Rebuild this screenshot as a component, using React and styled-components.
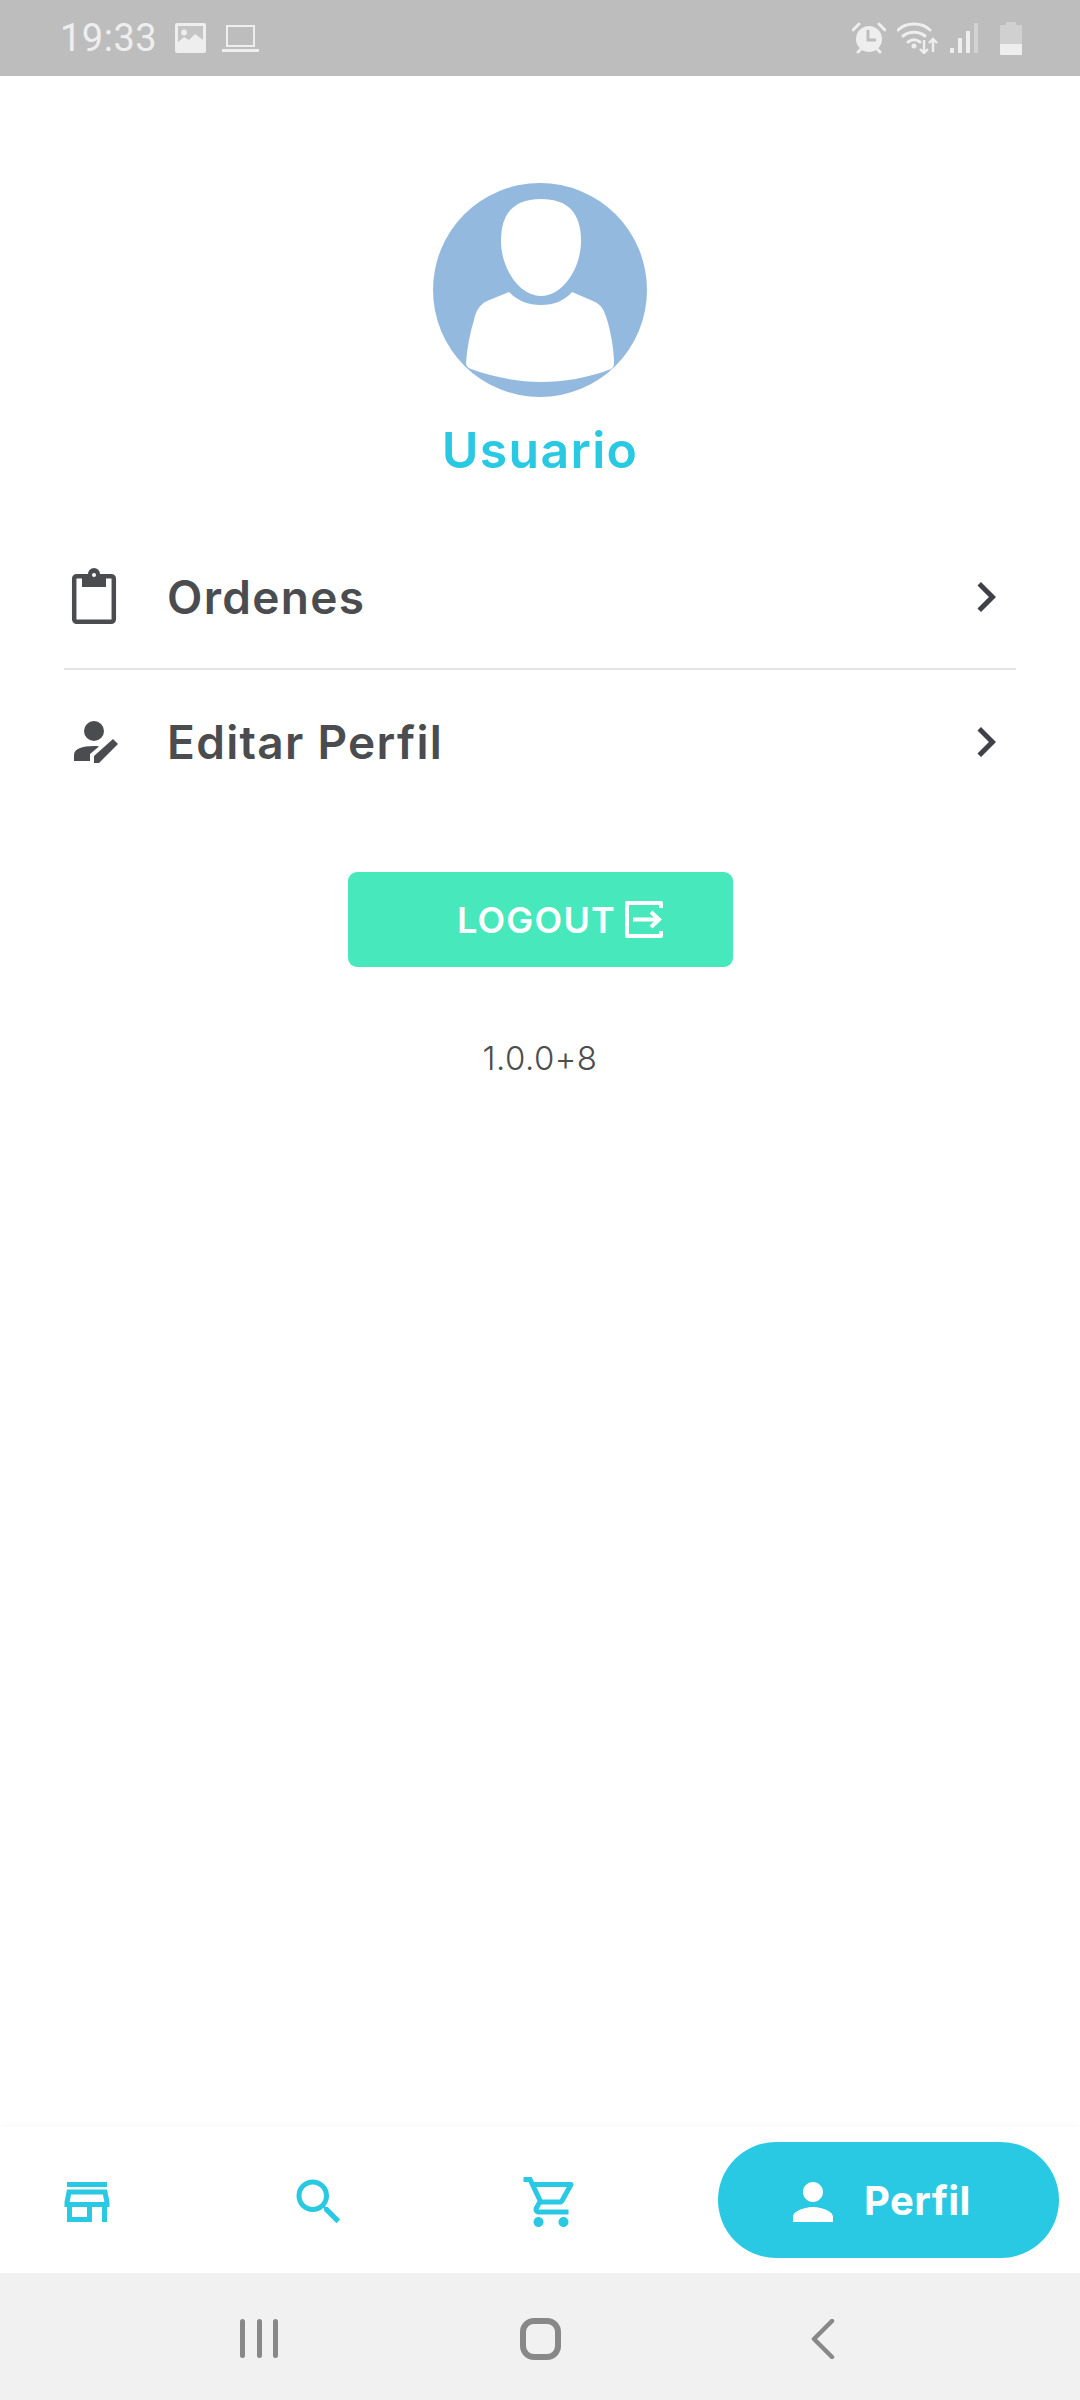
import React from "react";
import styled, { createGlobalStyle } from "styled-components";
import {
  MdOutlineStore,
  MdSearch,
  MdOutlineShoppingCart,
  MdPerson,
  MdChevronRight,
} from "react-icons/md";

const GlobalStyle = createGlobalStyle`
  html, body {
    margin: 0;
    padding: 0;
    background: #ffffff;
  }
  * {
    box-sizing: border-box;
  }
`;

const ImageIcon = () => (
  <StatusSvg width="31" height="30" viewBox="0 0 31 30">
    <rect width="31" height="30" rx="2" fill="#eeeeee" />
    <rect x="3" y="3" width="25" height="18" fill="#c4c4c4" />
    <circle cx="9" cy="9.5" r="3" fill="#eeeeee" />
    <path d="M3 19l6-5 5 3 6-6 8 6v10H3z" fill="#eeeeee" />
  </StatusSvg>
);

const LaptopIcon = () => (
  <StatusSvg width="37" height="27" viewBox="0 0 37 27">
    <rect x="5" y="1" width="27" height="20" fill="none" stroke="#eeeeee" strokeWidth="2" />
    <rect y="24" width="37" height="3" fill="#eeeeee" />
  </StatusSvg>
);

const AlarmIcon = () => (
  <StatusSvg width="34" height="32" viewBox="0 0 34 32">
    <circle cx="17" cy="17" r="13" fill="#eeeeee" />
    <path d="M16 8v10h8" fill="none" stroke="#bdbdbd" strokeWidth="3" />
    <path d="M1 8l6-6M33 8l-6-6M6 30l3-3M28 30l-3-3" stroke="#eeeeee" strokeWidth="3" strokeLinecap="round" />
  </StatusSvg>
);

const WifiIcon = () => (
  <StatusSvg width="42" height="32" viewBox="0 0 42 32">
    <g fill="none" stroke="#eeeeee" strokeWidth="3" strokeLinecap="round">
      <path d="M1 8C9 0 25 0 33 8" />
      <path d="M6 14c6-5 16-5 22 0" />
      <path d="M11 20c4-3 8-3 12 0" />
    </g>
    <circle cx="17" cy="24" r="2.5" fill="#eeeeee" />
    <g fill="none" stroke="#eeeeee" strokeWidth="2.4">
      <path d="M27 18v13M23 27l4 4 4-4" />
      <path d="M36 30V17M32 21l4-4 4 4" />
    </g>
  </StatusSvg>
);

const SignalIcon = () => (
  <StatusSvg width="30" height="30" viewBox="0 0 30 30">
    <rect x="0" y="25" width="4" height="5" fill="#eeeeee" />
    <rect x="8" y="15" width="4" height="15" fill="#eeeeee" />
    <rect x="16" y="8" width="4" height="22" fill="#eeeeee" />
    <rect x="24" y="0" width="4" height="30" fill="#d2d2d2" />
  </StatusSvg>
);

const BatteryIcon = () => (
  <BatterySvg width="22" height="33" viewBox="0 0 22 33">
    <path d="M6 0h10v3h5a1 1 0 0 1 1 1v19H0V4a1 1 0 0 1 1-1h5z" fill="#d0d0d0" />
    <path d="M0 22h22v10a1 1 0 0 1-1 1H1a1 1 0 0 1-1-1z" fill="#eeeeee" />
  </BatterySvg>
);

const AvatarImage = () => (
  <AvatarSvg viewBox="0 0 214 214">
    <circle cx="107" cy="107" r="107" fill="#94b9de" />
    <path
      d="M108 16C135 16 148 30 148 58C148 85 130 113 108 113C86 113 68 85 68 58C68 30 81 16 108 16Z"
      fill="#ffffff"
    />
    <path
      d="M76 109C85 118 95 122 108 122C121 122 131 118 139 109L160 118C170 122 172 130 175 140C179 155 181 170 181 180Q181 184 178 186C155 195 130 199 108 199C85 199 60 194 38 186Q33 184 33 180C34 165 37 150 41 137C43 128 46 122 54 118Z"
      fill="#ffffff"
    />
  </AvatarSvg>
);

const ClipboardIcon = () => (
  <RowSvg width="48" height="58" viewBox="0 0 48 58">
    <rect x="4.2" y="8.2" width="39.6" height="45.6" rx="2.5" fill="none" stroke="#4a4c50" strokeWidth="4.5" />
    <path d="M12 6h6a6 6 0 0 1 12 0h6v13H12z" fill="#4a4c50" />
    <circle cx="24" cy="7" r="2" fill="#ffffff" />
  </RowSvg>
);

const EditProfileIcon = () => (
  <RowSvg width="48" height="48" viewBox="-2 0 48 48">
    <circle cx="22" cy="13" r="10" fill="#4a4c50" />
    <path d="M2 43V37C2 31 10 28 22 28C24 28 26 28 27 28.5L18 36V43Z" fill="#4a4c50" />
    <path d="M22 45V38L41 21L46 26L27 45Z" fill="#4a4c50" />
  </RowSvg>
);

const LogoutIcon = () => (
  <LogoutSvg width="38" height="37" viewBox="0 0 38 37">
    <path d="M36 7V2H2V35H36V30" fill="none" stroke="#ffffff" strokeWidth="4" strokeLinejoin="round" />
    <path d="M8 18.5H33M26 11l8 7.5-8 7.5" fill="none" stroke="#ffffff" strokeWidth="4" />
  </LogoutSvg>
);

const rows = [
  { label: "Ordenes", icon: <ClipboardIcon /> },
  { label: "Editar Perfil", icon: <EditProfileIcon /> },
];

const App = () => {
  return (
    <Page>
      <GlobalStyle />
      <StatusBar>
        <Time>19:33</Time>
        <ImageIcon />
        <LaptopIcon />
        <StatusRight>
          <AlarmIcon />
          <WifiIcon />
          <SignalIcon />
          <BatteryIcon />
        </StatusRight>
      </StatusBar>
      <Main>
        <AvatarImage />
        <UserName>Usuario</UserName>
        <Menu>
          {rows.map((r) => (
            <MenuRow key={r.label}>
              <RowIcon>{r.icon}</RowIcon>
              <RowLabel>{r.label}</RowLabel>
              <Chevron />
            </MenuRow>
          ))}
        </Menu>
        <LogoutButton>
          LOGOUT
          <LogoutIcon />
        </LogoutButton>
        <Version>1.0.0+8</Version>
      </Main>
      <BottomNav>
        <NavIcons>
          <StoreIcon />
          <SearchIcon />
          <CartIcon />
        </NavIcons>
        <ActiveTab>
          <PersonIcon />
          <ActiveLabel>Perfil</ActiveLabel>
        </ActiveTab>
      </BottomNav>
      <SystemNav>
        <RecentsButton>
          <RecentBar />
          <RecentBar />
          <RecentBar />
        </RecentsButton>
        <HomeButton />
        <svg width="24" height="40" viewBox="0 0 24 40">
          <path d="M21 2L3 20L21 38" fill="none" stroke="#888888" strokeWidth="4.5" strokeLinecap="round" strokeLinejoin="round" />
        </svg>
      </SystemNav>
    </Page>
  );
};

const Page = styled.div`
  display: flex;
  flex-direction: column;
  width: 1080px;
  height: 2400px;
  overflow: hidden;
  background: #ffffff;
  font-family: Inter, "Liberation Sans", sans-serif;
`;
const StatusBar = styled.div`
  display: flex;
  align-items: center;
  gap: 16px;
  flex: 0 0 76px;
  padding: 0 58px 0 60px;
  background: #bdbdbd;
`;
const Time = styled.span`
  margin-right: 2px;
  font-family: Roboto, sans-serif;
  font-size: 38px;
  letter-spacing: 0.5px;
  color: #eeeeee;
`;
const StatusSvg = styled.svg`
  display: block;
  flex: none;
`;
const BatterySvg = styled(StatusSvg)`
  margin-left: 9px;
`;
const StatusRight = styled.div`
  display: flex;
  align-items: center;
  gap: 11px;
  margin-left: auto;
`;
const Main = styled.div`
  display: flex;
  flex: 1;
  flex-direction: column;
  align-items: center;
  padding-top: 107px;
`;
const AvatarSvg = styled.svg`
  display: block;
  width: 214px;
  height: 214px;
`;
const UserName = styled.div`
  margin-top: 23px;
  font-size: 50px;
  line-height: 60px;
  font-weight: 600;
  letter-spacing: 1.3px;
  color: #29c9e3;
`;
const Menu = styled.div`
  width: 952px;
  margin-top: 46px;
`;
const MenuRow = styled.div`
  display: flex;
  align-items: center;
  height: 144px;
  &:first-child {
    border-bottom: 2px solid #e3e3e3;
  }
`;
const RowIcon = styled.div`
  flex: 0 0 103px;
  padding-left: 6px;
`;
const RowSvg = styled.svg`
  display: block;
`;
const RowLabel = styled.span`
  flex: 1;
  font-size: 46px;
  font-weight: 600;
  letter-spacing: 1.3px;
  color: #4a4c50;
`;
const Chevron = styled(MdChevronRight)`
  width: 60px;
  height: 60px;
  color: #3f4148;
`;
const LogoutButton = styled.div`
  display: flex;
  align-items: center;
  justify-content: center;
  gap: 9px;
  width: 385px;
  height: 95px;
  margin-top: 58px;
  padding-left: 40px;
  border-radius: 9px;
  background: #48e8bd;
  color: #ffffff;
  font-size: 36px;
  font-weight: 600;
  letter-spacing: 1.2px;
`;
const LogoutSvg = styled.svg`
  display: block;
  flex: none;
`;
const Version = styled.div`
  margin-top: 71px;
  font-size: 33px;
  font-weight: 300;
  letter-spacing: 0.5px;
  color: #4d4d4d;
`;
const BottomNav = styled.div`
  display: flex;
  align-items: center;
  justify-content: space-between;
  flex: 0 0 146px;
  padding: 0 21px 0 57px;
  background: #ffffff;
  box-shadow: 0 -3px 8px rgba(0, 0, 0, 0.025);
`;
const NavIcons = styled.div`
  display: flex;
  align-items: center;
  gap: 172px;
  padding-top: 4px;
  color: #29c9e3;
`;
const StoreIcon = styled(MdOutlineStore)`
  width: 60px;
  height: 60px;
`;
const SearchIcon = styled(MdSearch)`
  width: 60px;
  height: 60px;
`;
const CartIcon = styled(MdOutlineShoppingCart)`
  width: 60px;
  height: 60px;
`;
const ActiveTab = styled.div`
  display: flex;
  align-items: center;
  gap: 21px;
  width: 341px;
  height: 116px;
  padding-left: 65px;
  border-radius: 58px;
  background: #29c9e3;
  color: #ffffff;
`;
const PersonIcon = styled(MdPerson)`
  width: 60px;
  height: 60px;
  margin-top: 4px;
`;
const ActiveLabel = styled.span`
  font-size: 40px;
  font-weight: 700;
  letter-spacing: 0.4px;
`;
const SystemNav = styled.div`
  display: flex;
  align-items: center;
  gap: 242px;
  flex: 0 0 127px;
  padding: 4px 0 0 240px;
  background: #f1f1f1;
`;
const RecentsButton = styled.div`
  display: flex;
  gap: 11.5px;
`;
const RecentBar = styled.div`
  width: 5px;
  height: 39px;
  border-radius: 2.5px;
  background: #888888;
`;
const HomeButton = styled.div`
  width: 41px;
  height: 42px;
  margin-right: 8px;
  border: 6px solid #888888;
  border-radius: 14px;
`;
export default App;
